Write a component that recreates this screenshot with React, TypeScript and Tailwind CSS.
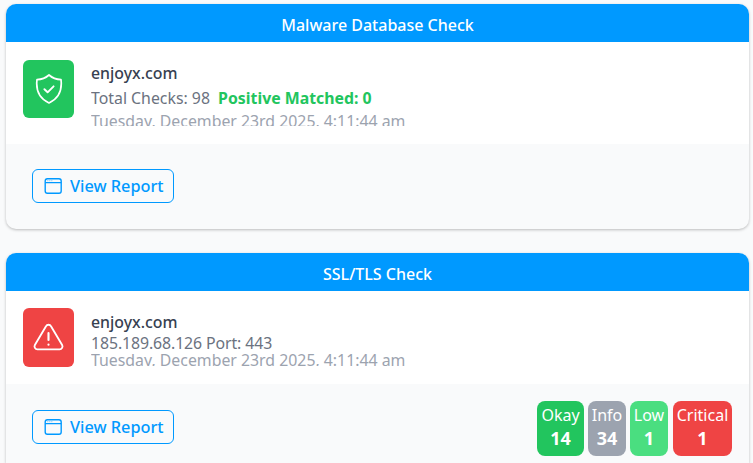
import React from 'react';

const font = { fontFamily: '"Noto Sans", sans-serif' };

const WindowIcon = () => (
    <svg width="19" height="18" viewBox="0 0 19 18" fill="none" stroke="currentColor" strokeWidth="1.4" className="shrink-0">
        <rect x="1.2" y="1.7" width="16" height="14.6" rx="2.2" />
        <path d="M1.2 5.6h16" />
        <path d="M3.6 3.7h.6M5.6 3.7h.6M7.6 3.7h.6" strokeWidth="0.9" />
    </svg>
);

const ShieldIcon = () => (
    <svg width="30" height="32" viewBox="0 0 30 32" fill="none" stroke="white" strokeWidth="1.7" strokeLinecap="round" strokeLinejoin="round">
        <path d="M15 2c3.200 2.900 7.300 4.500 12 4.600 1 8 -.5 18 -12 23.400C3.500 24.600 2 14.600 3 6.600 7.700 6.500 11.800 4.900 15 2z" />
        <path d="M10.400 16.200l3.200 3.100 6 -6" strokeWidth="1.900" />
    </svg>
);

const AlertIcon = () => (
    <svg width="31" height="29" viewBox="0 0 32 30" fill="none" stroke="white" strokeWidth="1.900" strokeLinecap="round" strokeLinejoin="round">
        <path d="M13.400 3.300 1.900 22.800c-1.100 2 .3 4.400 2.600 4.400h23c2.300 0 3.700 -2.400 2.600 -4.400L18.600 3.300c-1.100 -2 -4.100 -2 -5.200 0z" />
        <path d="M16 10.500v7M16 22.300v.2" strokeWidth="2.200" />
    </svg>
);

const ViewReport = () => (
    <button className="flex items-center gap-[7px] h-[34px] w-[142px] pl-[11px] border border-[#0099ff] rounded-md text-[#0099ff] text-[16.300px] font-medium">
        <WindowIcon />
        <span className="mt-[1px]">View Report</span>
    </button>
);

const Badge: React.FC<{ label: string; value: number; color: string; width: string }> = ({ label, value, color, width }) => (
    <div className={`flex flex-col items-center h-[55px] rounded-lg text-white ${color} ${width}`}>
        <span className="text-[16px] leading-[22px] mt-[3px]">{label}</span>
        <span className="text-[18px] leading-[22px] mt-[1px] font-bold">{value}</span>
    </div>
);

export default function App() {
    return (
        <div style={font} className="h-[463px] overflow-hidden bg-[#f9fafb] pt-[4px]">
            <div className="ml-[6px] mr-[4px] rounded-[10px] shadow-[0_1px_3px_rgba(0,0,0,0.25)] overflow-hidden bg-[#f9fafb]">
                <div className="h-[38px] bg-[#0099ff] text-white text-center text-[16px] font-medium leading-[42px]">Malware Database Check</div>
                <div className="flex items-start h-[102px] bg-white pt-[18px] pl-[17px]">
                    <div className="flex items-center justify-center w-[51px] h-[58px] rounded-md bg-[#22c55e]">
                        <ShieldIcon />
                    </div>
                    <div className="ml-[17px] h-[66px] overflow-hidden text-[15.850px]">
                        <div className="mt-[1px] leading-[24px] font-medium text-[#374151]">enjoyx.com</div>
                        <div className="mt-[1px] leading-[25px] text-[#6b7280]">
                            Total Checks: 98 <span className="ml-[4px] font-bold text-[#22c55e]">Positive Matched: 0</span>
                        </div>
                        <div className="leading-[20px] text-[#9ca3af]">Tuesday, December 23rd 2025, 4:11:44 am</div>
                    </div>
                </div>
                <div className="h-[85px] flex items-start pt-[25px] pl-[26px]">
                    <ViewReport />
                </div>
            </div>

            <div className="mt-[24px] ml-[6px] mr-[4px] rounded-t-[10px] shadow-[0_1px_3px_rgba(0,0,0,0.25)] overflow-hidden bg-[#f9fafb]">
                <div className="h-[38px] bg-[#0099ff] text-white text-center text-[16px] font-medium leading-[42px]">SSL/TLS Check</div>
                <div className="flex items-start h-[93px] bg-white pt-[17px] pl-[17px]">
                    <div className="flex items-center justify-center w-[51px] h-[59px] rounded-md bg-[#ef4444]">
                        <AlertIcon />
                    </div>
                    <div className="ml-[17px] h-[58px] overflow-hidden text-[15.850px]">
                        <div className="mt-[2px] leading-[24px] font-medium text-[#374151]">enjoyx.com</div>
                        <div className="leading-[18px] tracking-[-0.1px] text-[#6b7280]">185.189.68.126 Port: 443</div>
                        <div className="leading-[16px] text-[#9ca3af]">Tuesday, December 23rd 2025, 4:11:44 am</div>
                    </div>
                </div>
                <div className="h-[79px] flex items-start justify-between pt-[26px] pl-[26px] pr-[17px]">
                    <ViewReport />
                    <div className="flex gap-[4px] -mt-[9px]">
                        <Badge label="Okay" value={14} color="bg-[#22c55e]" width="w-[47px]" />
                        <Badge label="Info" value={34} color="bg-[#9ca3af]" width="w-[38px]" />
                        <Badge label="Low" value={1} color="bg-[#4ade80]" width="w-[38px]" />
                        <div className="ml-[1px]">
                            <Badge label="Critical" value={1} color="bg-[#ef4444]" width="w-[59px]" />
                        </div>
                    </div>
                </div>
            </div>
        </div>
    );
}
